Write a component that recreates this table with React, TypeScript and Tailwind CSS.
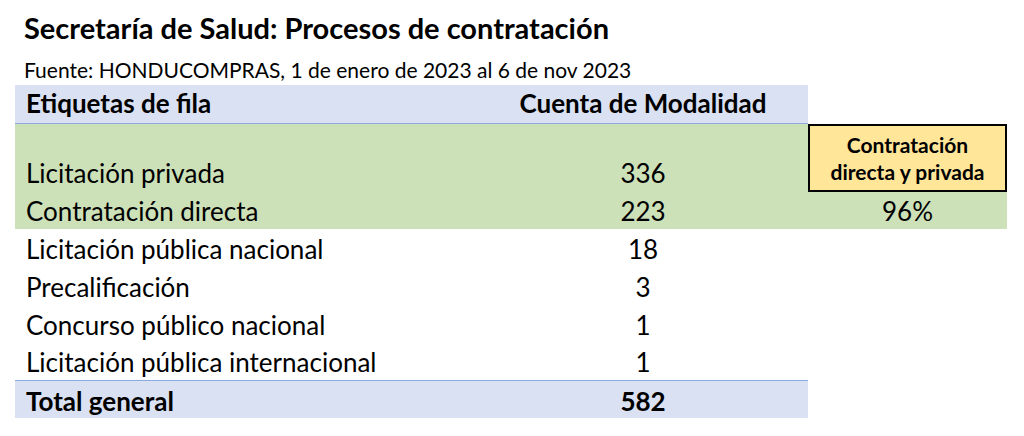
import React from "react";

const rows = [
  { label: "Licitación pública nacional", count: 18, h: "h-[38px]" },
  { label: "Precalificación", count: 3, h: "h-[38px]" },
  { label: "Concurso público nacional", count: 1, h: "h-[38px]" },
  { label: "Licitación pública internacional", count: 1, h: "h-[37px]" },
];

export default function App() {
  return (
    <div
      className="w-[1024px] h-[436px] bg-white text-black overflow-hidden"
      style={{ fontFamily: "Lato, 'Noto Sans', sans-serif" }}
    >
      <div className="pl-[24px] pt-[13px]">
        <h1 className="text-[29px] font-bold leading-[29px]">
          Secretaría de Salud: Procesos de contratación
        </h1>
        <p className="text-[21px] leading-[21px] mt-[17px]">
          Fuente: HONDUCOMPRAS, 1 de enero de 2023 al 6 de nov 2023
        </p>
      </div>

      <div className="ml-[15px] mt-[5px] grid grid-cols-[463px_330px_199px] text-[26px] leading-[26px]">
        {/* header */}
        <div className="col-span-2 grid grid-cols-[463px_330px] h-[39px] bg-[#d9e1f2] border-b border-[#8ea9db] font-bold items-end pb-[7px]">
          <div className="pl-[11px]">Etiquetas de fila</div>
          <div className="text-center">Cuenta de Modalidad</div>
        </div>
        <div className="h-[39px]" />

        {/* green rows */}
        <div className="col-span-2 bg-[#cde1b9] grid grid-cols-[463px_330px]">
          <div className="h-[68px] pl-[11px] flex items-end pb-[6px]">Licitación privada</div>
          <div className="h-[68px] flex items-end justify-center pb-[6px]">336</div>
          <div className="h-[37px] pl-[11px] flex items-end pb-[5px]">Contratación directa</div>
          <div className="h-[37px] flex items-end justify-center pb-[5px]">223</div>
        </div>
        <div className="flex flex-col">
          <div className="h-[68px] bg-[#ffe699] border-2 border-black flex flex-col items-center pt-[5px] text-[21px] font-bold leading-[27px]">
            <span>Contratación</span>
            <span>directa y privada</span>
          </div>
          <div className="h-[37px] bg-[#cde1b9] flex items-end justify-center pb-[5px]">96%</div>
        </div>

        {/* other rows */}
        {rows.map((r) => (
          <React.Fragment key={r.label}>
            <div className={`${r.h} pl-[11px] flex items-end pb-[5px]`}>{r.label}</div>
            <div className={`${r.h} flex items-end justify-center pb-[5px]`}>{r.count}</div>
            <div />
          </React.Fragment>
        ))}

        {/* total */}
        <div className="col-span-2 grid grid-cols-[463px_330px] h-[38px] bg-[#d9e1f2] border-t border-[#8ea9db] font-bold items-end pb-[4px]">
          <div className="pl-[11px]">Total general</div>
          <div className="text-center">582</div>
        </div>
        <div />
      </div>
    </div>
  );
}
